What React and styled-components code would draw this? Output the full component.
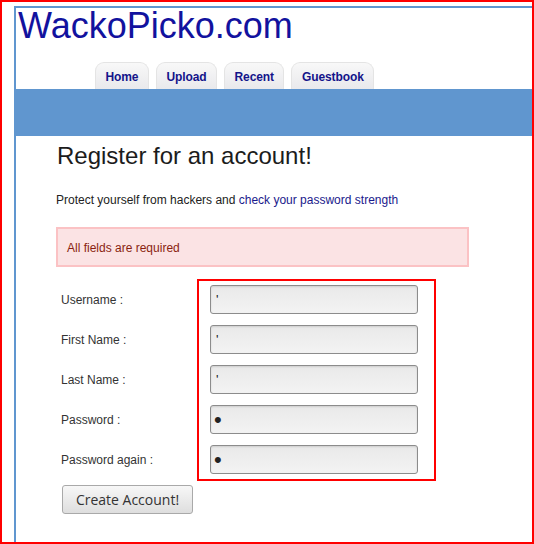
import React from 'react'
import styled, {createGlobalStyle} from 'styled-components'

const GlobalStyle = createGlobalStyle`
  html, body {
    margin: 0;
    padding: 0;
    background: #fff;
  }
  body {
    font-family: "Liberation Sans", Arial, sans-serif;
  }
`

const Shot = styled.div`
  width: 534px;
  height: 544px;
  box-sizing: border-box;
  border: 2px solid #ff0000;
  padding: 4px 0 0 12px;
  overflow: hidden;
  background: #fff;
`

const Page = styled.div`
  width: 620px;
  min-height: 560px;
  border-top: 2px solid #6096cf;
  border-left: 2px solid #6096cf;
`

const SiteTitle = styled.h1`
  margin: 0;
  padding-left: 2px;
  font-size: 36px;
  line-height: 36px;
  font-weight: normal;
  color: #12129e;
`

const Tabs = styled.ul`
  list-style: none;
  margin: 18px 0 0;
  padding: 0 0 0 79px;
  display: flex;
  gap: 7px;
`

const Tab = styled.li`
  padding: 7px 9.5px 5px;
  line-height: 14px;
  font-size: 12px;
  font-weight: bold;
  letter-spacing: -0.1px;
  color: #14148a;
  border: 1px solid #e4e4e4;
  border-bottom: none;
  border-radius: 9px 9px 0 0;
  background: linear-gradient(#f8f8f8, #e9e9ec);
`

const BlueBar = styled.div`
  height: 47px;
  background: #6096cf;
`

const Content = styled.div`
  padding: 0 0 0 40px;
  width: 413px;
`

const Heading = styled.h2`
  margin: 6px 0 0 1px;
  font-size: 24px;
  line-height: 28px;
  font-weight: normal;
  color: #1c1c1c;
`

const Intro = styled.p`
  margin: 22px 0 0;
  font-size: 12px;
  line-height: 16px;
  color: #222;
  a {
    color: #1a1a8c;
    text-decoration: none;
  }
`

const ErrorBox = styled.div`
  margin-top: 19px;
  border: 2px solid #fbc2c4;
  background: #fbe3e4;
  color: #8a1f11;
  font-size: 12px;
  line-height: 16px;
  padding: 11px 9px 9px;
`

const Form = styled.form`
  margin-top: 12px;
  display: flex;
`

const Labels = styled.div`
  width: 136px;
  padding: 6px 0 0 5px;
  display: flex;
  flex-direction: column;
  gap: 11px;
`

const Label = styled.label`
  height: 29px;
  display: flex;
  align-items: center;
  font-size: 12px;
  color: #333;
`

const FieldBox = styled.div`
  width: 208px;
  border: 2px solid #ff0000;
  padding: 4px 16px 5px 11px;
  display: flex;
  flex-direction: column;
  gap: 11px;
`

const Field = styled.input`
  box-sizing: border-box;
  width: 208px;
  height: 29px;
  margin: 0;
  padding: 0 ${p => p.$secret ? 3 : 5}px;
  border: 1px solid #8c8c8c;
  border-radius: 3px;
  background: linear-gradient(#e9e9e9, #f3f3f3);
  box-shadow: inset 0 1px 2px rgba(0,0,0,0.12);
  font-family: "Liberation Sans", Arial, sans-serif;
  font-size: ${p => p.$secret ? 22 : 13}px;
  color: #222;
  outline: none;
`

const Submit = styled.button`
  margin: 4px 0 0 6px;
  width: 131px;
  height: 29px;
  padding: 0;
  border: 1px solid #a9a9a9;
  border-radius: 3px;
  background: linear-gradient(#f7f7f7, #dedede);
  font-family: "Open Sans", sans-serif;
  font-size: 14px;
  color: #333;
`

const fields = [
  {label: 'Username :', type: 'text'},
  {label: 'First Name :', type: 'text'},
  {label: 'Last Name :', type: 'text'},
  {label: 'Password :', type: 'password'},
  {label: 'Password again :', type: 'password'},
]

const App = () => {
  return (
    <Shot>
      <GlobalStyle />
      <Page>
        <SiteTitle>WackoPicko.com</SiteTitle>
        <Tabs>
          <Tab>Home</Tab>
          <Tab>Upload</Tab>
          <Tab>Recent</Tab>
          <Tab>Guestbook</Tab>
        </Tabs>
        <BlueBar />
        <Content>
          <Heading>Register for an account!</Heading>
          <Intro>
            Protect yourself from hackers and <a href="#">check your password strength</a>
          </Intro>
          <ErrorBox>All fields are required</ErrorBox>
          <Form onSubmit={(e)=>e.preventDefault()}>
            <Labels>
              {fields.map(f=>(
                <Label key={f.label}>{f.label}</Label>
              ))}
            </Labels>
            <FieldBox>
              {fields.map(f=>(
                <Field
                  key={f.label}
                  type={f.type}
                  $secret={f.type === 'password'}
                  defaultValue="'"
                  readOnly
                />
              ))}
            </FieldBox>
          </Form>
          <Submit type="button">Create Account!</Submit>
        </Content>
      </Page>
    </Shot>
  )
}

export default App
